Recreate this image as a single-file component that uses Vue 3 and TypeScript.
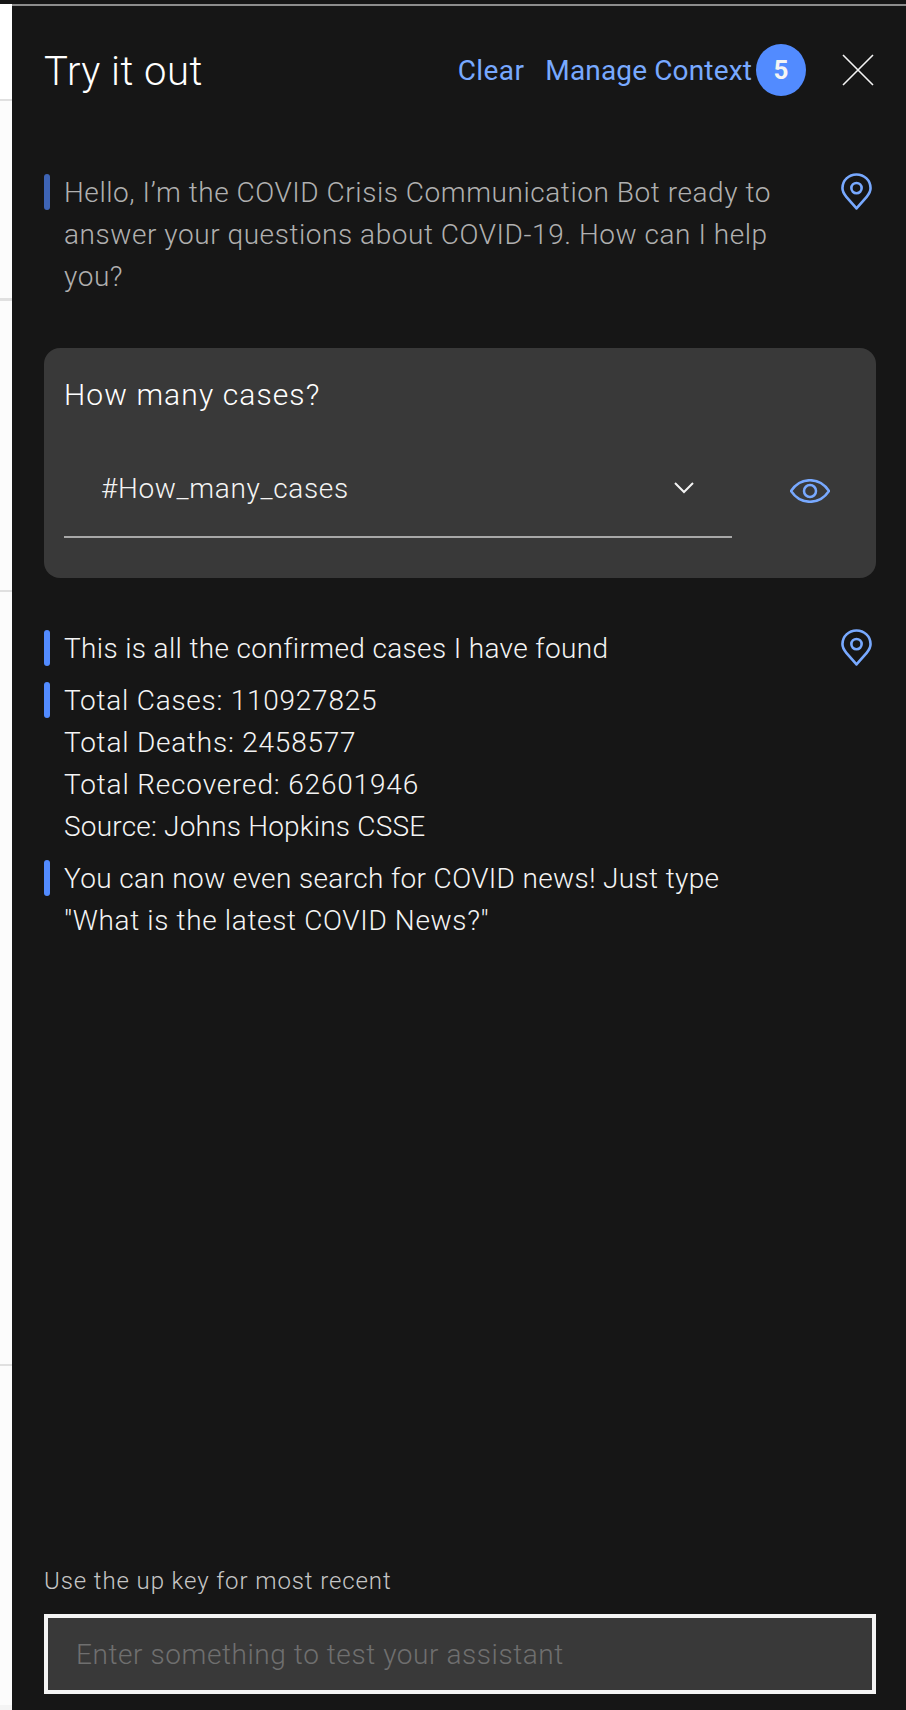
<script setup lang="ts">
const stripLines = [
  { y: 99, h: 2 },
  { y: 298, h: 3 },
  { y: 590, h: 2 },
  { y: 1364, h: 2 },
]
const totals = [
  { text: 'Total Cases: 110927825', spacing: 0.75 },
  { text: 'Total Deaths: 2458577', spacing: 0.78 },
  { text: 'Total Recovered: 62601946', spacing: 0.83 },
  { text: 'Source: Johns Hopkins CSSE', spacing: 0.2 },
]
</script>

<template>
  <div class="page">
    <div class="strip">
      <i class="strip-top"></i>
      <i
        v-for="l in stripLines"
        :key="l.y"
        class="strip-line"
        :style="{ top: l.y + 'px', height: l.h + 'px' }"
      ></i>
      <i class="strip-bottom"></i>
    </div>
    <div class="panel">
      <header class="head">
        <h1 class="title">Try it out</h1>
        <div class="actions">
          <span class="link clear">Clear</span>
          <span class="link">Manage Context</span>
          <span class="badge">5</span>
          <svg class="close" viewBox="0 0 32 32" width="32" height="32">
            <path d="M1 1 L31 31 M31 1 L1 31" stroke="#f4f4f4" stroke-width="1.6" fill="none" />
          </svg>
        </div>
      </header>

      <section class="msg intro">
        <div class="msg-body">
          <div class="line dim"><i class="bar dimbar"></i><p>Hello, I’m the COVID Crisis Communication Bot ready to<br />answer your questions about COVID-19. How can I help<br />you?</p></div>
        </div>
        <svg class="pin" viewBox="0 0 32 38" width="31" height="37">
          <path d="M16 36.5 L5.5 24.5 C3 21.6 1.5 18.6 1.5 15.5 C1.5 7.5 8 1.5 16 1.5 C24 1.5 30.5 7.5 30.5 15.5 C30.5 18.6 29 21.6 26.5 24.5 Z" fill="none" stroke="#78a9ff" stroke-width="2.7" stroke-linejoin="round" />
          <circle cx="16" cy="15.5" r="5.3" fill="none" stroke="#78a9ff" stroke-width="2.7" />
        </svg>
      </section>

      <section class="card">
        <div class="card-q">How many cases?</div>
        <div class="card-row">
          <div class="select">
            <span>#How_many_cases</span>
            <svg class="chev" viewBox="0 0 20 12" width="20" height="12">
              <path d="M1 1 L10 10 L19 1" fill="none" stroke="#f4f4f4" stroke-width="2" />
            </svg>
          </div>
          <svg class="eye" viewBox="0 0 40 24" width="40" height="24">
            <path d="M1 12 C6 4.5 13 1.2 20 1.2 C27 1.2 34 4.5 39 12 C34 19.5 27 22.8 20 22.8 C13 22.8 6 19.5 1 12 Z" fill="none" stroke="#78a9ff" stroke-width="2.5" />
            <circle cx="20" cy="12" r="6" fill="none" stroke="#78a9ff" stroke-width="2.5" />
          </svg>
        </div>
      </section>

      <section class="msg reply">
        <div class="msg-body">
          <div class="line"><i class="bar"></i><p>This is all the confirmed cases I have found</p></div>
          <div class="line">
            <i class="bar"></i>
            <p>
              <span v-for="t in totals" :key="t.text" class="total" :style="{ letterSpacing: t.spacing + 'px' }">{{ t.text }}</span>
            </p>
          </div>
          <div class="line"><i class="bar"></i><p>You can now even search for COVID news! Just type<br /><span class="quote">"What is the latest COVID News?"</span></p></div>
        </div>
        <svg class="pin" viewBox="0 0 32 38" width="31" height="37">
          <path d="M16 36.5 L5.5 24.5 C3 21.6 1.5 18.6 1.5 15.5 C1.5 7.5 8 1.5 16 1.5 C24 1.5 30.5 7.5 30.5 15.5 C30.5 18.6 29 21.6 26.5 24.5 Z" fill="none" stroke="#78a9ff" stroke-width="2.7" stroke-linejoin="round" />
          <circle cx="16" cy="15.5" r="5.3" fill="none" stroke="#78a9ff" stroke-width="2.7" />
        </svg>
      </section>

      <footer class="foot">
        <div class="hint">Use the up key for most recent</div>
        <div class="input">Enter something to test your assistant</div>
      </footer>
    </div>
  </div>
</template>

<style>
html, body { margin: 0; background: #fff; }
</style>

<style scoped>
.page {
  display: flex;
  width: 906px;
  height: 1710px;
  overflow: hidden;
  font-family: Roboto, "Liberation Sans", sans-serif;
  font-weight: 300;
  color: #f4f4f4;
}
.strip {
  position: relative;
  width: 12px;
  flex: none;
  background: linear-gradient(#fff 0 100px, #fcfcfc 100px);
}
.strip-top { position: absolute; left: 0; top: 0; width: 12px; height: 4px; background: #161616; }
.strip-line { position: absolute; left: 0; width: 12px; background: #e0e0e0; }
.strip-bottom { position: absolute; left: 0; bottom: 0; width: 12px; height: 5px; background: #f4f4f4; }
.panel {
  flex: 1;
  display: flex;
  flex-direction: column;
  background: #161616;
  padding: 0 30px 0 32px;
  position: relative;
}
.panel::before {
  content: "";
  position: absolute;
  left: 0;
  right: 0;
  top: 4px;
  height: 2px;
  background: #8d8d8d;
}
.head {
  display: flex;
  align-items: center;
  justify-content: space-between;
  height: 52px;
  margin-top: 44px;
}
.title {
  margin: 0;
  padding-top: 3px;
  font-size: 40px;
  font-weight: 300;
  line-height: 52px;
  letter-spacing: 0.5px;
  color: #fff;
}
.actions { display: flex; align-items: center; }
.link {
  padding-top: 2px;
  font-size: 28px;
  color: #78a9ff;
  line-height: 36px;
  font-weight: 400;
  letter-spacing: 0.15px;
}
.link.clear { margin-right: 21px; letter-spacing: 0.4px; }
.badge {
  width: 50px;
  height: 52px;
  margin-left: 4px;
  border-radius: 50%;
  background: #528bff;
  color: #f4f4f4;
  display: flex;
  align-items: center;
  justify-content: center;
  font-size: 26px;
  font-weight: 700;
}
.close { margin-left: 36px; margin-right: 2px; }
.msg { display: flex; justify-content: space-between; align-items: flex-start; }
.intro { margin-top: 75px; }
.msg-body { display: flex; flex-direction: column; gap: 10px; }
.line { display: flex; gap: 14px; }
.line p { margin: 1px 0 -1px; font-size: 28px; line-height: 42px; letter-spacing: 0.36px; color: #f4f4f4; }
.line.dim p { color: #b0b0b0; letter-spacing: 0.55px; }
.total { display: block; }
.quote { letter-spacing: 0.65px; }
.bar { width: 6px; height: 36px; margin-top: 3px; border-radius: 3px; background: #528bff; flex: none; }
.dimbar { background: #3e64b5; }
.pin { margin: 2px 4px 0 0; }
.card {
  margin-top: 51px;
  height: 230px;
  box-sizing: border-box;
  padding: 27px 20px 0;
  background: #393939;
  border-radius: 16px;
}
.card-q { font-size: 30px; line-height: 40px; letter-spacing: 1.1px; color: #fff; font-weight: 300; }
.card-row { display: flex; align-items: flex-start; margin-top: 43px; }
.select {
  width: 668px;
  height: 80px;
  box-sizing: border-box;
  border-bottom: 2px solid #a8a8a8;
  padding: 0 38px 18px 37px;
  display: flex;
  align-items: center;
  justify-content: space-between;
  font-size: 28px;
  letter-spacing: 0.65px;
}
.eye { margin: 21px 0 0 58px; }
.reply { margin-top: 49px; }
.foot { margin-top: auto; padding-bottom: 16px; }
.hint { font-size: 24px; color: #c6c6c6; letter-spacing: 0.9px; line-height: 32px; margin-bottom: 17px; }
.input {
  height: 80px;
  box-sizing: border-box;
  border: 4px solid #f4f4f4;
  background: #393939;
  padding: 0 28px;
  display: flex;
  align-items: center;
  font-size: 28px;
  letter-spacing: 0.57px;
  color: #6f6f6f;
}
</style>
